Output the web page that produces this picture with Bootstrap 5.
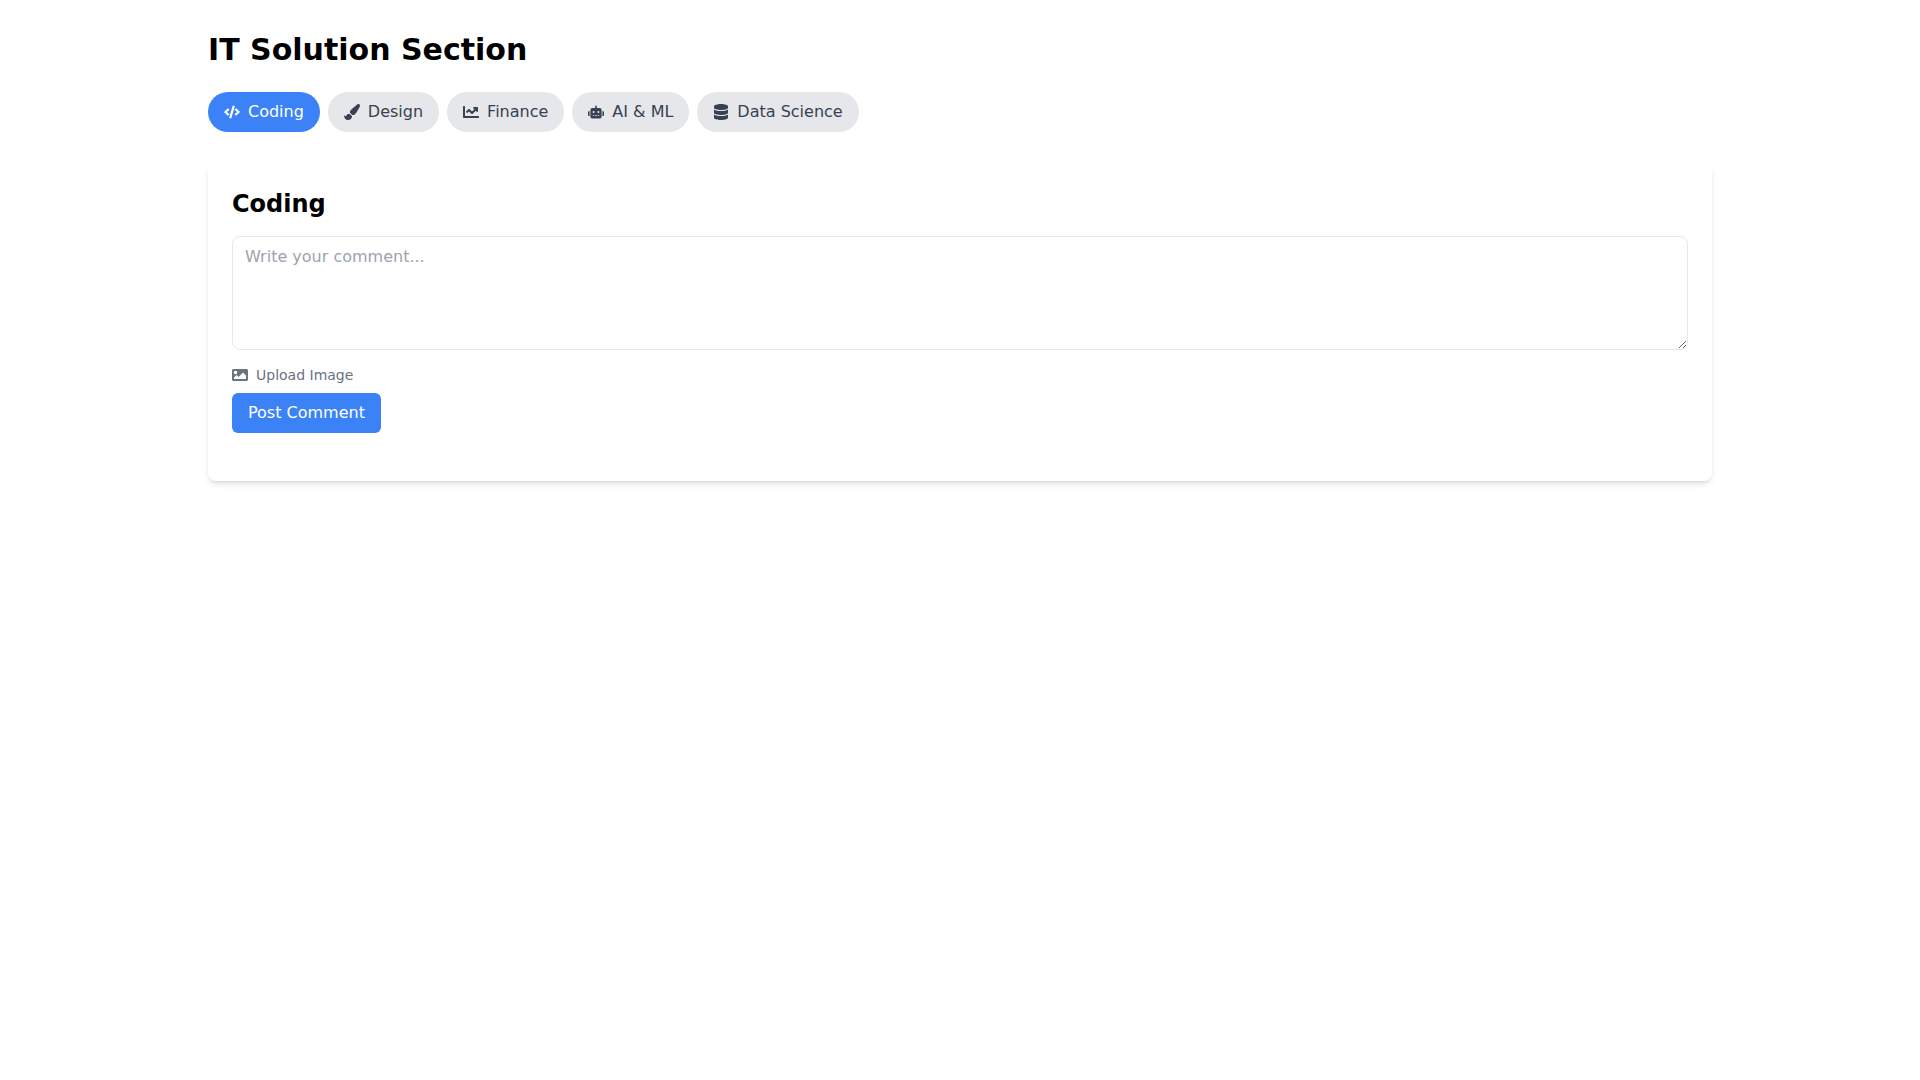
<!DOCTYPE html>
<html lang="en">
<head>
    <meta charset="UTF-8">
    <meta name="viewport" content="width=device-width, initial-scale=1.0">
    <title>IT Solution Section</title>
    <link href="https://cdn.jsdelivr.net/npm/bootstrap@5.3.0/dist/css/bootstrap.min.css" rel="stylesheet">
    <style>
        body {
            font-family: "DejaVu Sans", sans-serif;
            background: #fff;
            color: #000;
            -webkit-font-smoothing: antialiased;
        }
        .page-wrap {
            max-width: 1536px;
            padding: 32px 16px;
        }
        .page-title {
            font-size: 30px;
            line-height: 36px;
            font-weight: 700;
            margin-bottom: 24px;
        }
        .tab-row {
            margin-bottom: 32px;
        }
        .tab-pill {
            height: 40px;
            padding: 8px 16px;
            font-size: 16px;
            line-height: 24px;
            border: 0;
            border-radius: 20px;
            background: #e5e7eb;
            color: #374151;
        }
        .tab-pill:hover, .tab-pill:active {
            background: #e5e7eb;
            color: #374151;
        }
        .tab-pill.is-active, .tab-pill.is-active:hover {
            background: #3b82f6;
            color: #fff;
        }
        .tab-icon {
            width: 16px;
            height: 16px;
            margin-right: 8px;
            fill: currentColor;
            flex: none;
        }
        .panel {
            border: 0;
            border-radius: 8px;
            padding: 24px;
            margin-bottom: 24px;
            box-shadow: 0 4px 6px -1px rgba(0,0,0,.1), 0 2px 4px -2px rgba(0,0,0,.1);
        }
        .panel-title {
            font-size: 24px;
            line-height: 32px;
            font-weight: 700;
            margin-bottom: 16px;
        }
        .comment-box {
            height: 114px;
            padding: 8px 12px;
            font-size: 16px;
            line-height: 24px;
            border: 1px solid #e5e7eb;
            border-radius: 8px;
            color: #374151;
            margin-bottom: 15px;
        }
        .comment-box::placeholder {
            color: #9ca3af;
        }
        .upload-link {
            font-size: 14px;
            line-height: 20px;
            color: #6b7280;
            margin-bottom: 8px;
            cursor: pointer;
        }
        .post-row {
            margin-bottom: 24px;
        }
        .post-btn {
            height: 40px;
            padding: 8px 16px;
            font-size: 16px;
            line-height: 24px;
            border: 0;
            border-radius: 6px;
            background: #3b82f6;
            color: #fff;
        }
        .post-btn:hover {
            background: #3b82f6;
            color: #fff;
        }
    </style>
</head>
<body>
    <div class="container page-wrap">
        <h1 class="page-title">IT Solution Section</h1>

        <!-- Tabs -->
        <div class="d-flex gap-2 tab-row">
            <button class="btn tab-pill is-active d-flex align-items-center">
                <svg class="tab-icon" viewBox="0 0 640 512"><path d="M278.9 511.5l-61-17.7c-6.4-1.8-10-8.5-8.2-14.9L346.2 8.7c1.8-6.4 8.5-10 14.9-8.2l61 17.7c6.4 1.8 10 8.5 8.2 14.9L293.8 503.3c-1.9 6.4-8.5 10.1-14.9 8.2zm-114-112.2l43.5-46.4c4.6-4.9 4.3-12.7-.8-17.2L117 256l90.6-79.7c5.1-4.5 5.5-12.3.8-17.2l-43.5-46.4c-4.5-4.8-12.1-5.1-17-.5L3.8 247.2c-5.1 4.7-5.1 12.8 0 17.5l144.1 135.1c4.9 4.6 12.5 4.4 17-.5zm327.2.6l144.1-135.1c5.1-4.7 5.1-12.8 0-17.5L492.1 112.1c-4.8-4.5-12.4-4.3-17 .5L431.6 159c-4.6 4.9-4.3 12.7.8 17.2L523 256l-90.6 79.7c-5.1 4.5-5.5 12.3-.8 17.2l43.5 46.4c4.5 4.9 12.1 5.1 17 .6z"/></svg>
                Coding
            </button>
            <button class="btn tab-pill d-flex align-items-center">
                <svg class="tab-icon" viewBox="0 0 512 512"><path d="M167.02 309.34c-40.12 2.58-76.53 17.86-97.19 72.3-2.35 6.21-8 9.98-14.59 9.98-11.11 0-45.46-27.67-55.25-34.35C0 439.62 37.93 512 128 512c75.86 0 128-43.77 128-120.19 0-3.11-.65-6.08-.97-9.13l-88.01-73.34zM457.89 0c-15.16 0-29.37 6.71-40.21 16.45C213.27 199.05 192 203.34 192 257.09c0 13.7 3.25 26.76 8.73 38.7l63.82 53.18c7.21 1.8 14.64 3.03 22.39 3.03 62.11 0 98.11-45.47 211.16-256.46 7.38-14.35 13.9-29.85 13.9-45.99C512 20.64 486 0 457.89 0z"/></svg>
                Design
            </button>
            <button class="btn tab-pill d-flex align-items-center">
                <svg class="tab-icon" viewBox="0 0 512 512"><path d="M496 384H64V80c0-8.84-7.16-16-16-16H16C7.16 64 0 71.16 0 80v336c0 17.67 14.33 32 32 32h464c8.84 0 16-7.16 16-16v-32c0-8.84-7.16-16-16-16zM464 96H345.94c-21.38 0-32.09 25.85-16.97 40.97l32.4 32.4L288 242.75l-73.37-73.37c-12.5-12.5-32.76-12.5-45.25 0l-68.69 68.69c-6.25 6.25-6.25 16.38 0 22.63l22.62 22.62c6.25 6.25 16.38 6.25 22.63 0L192 237.25l73.37 73.37c12.5 12.5 32.76 12.5 45.25 0l96-96 32.4 32.4c15.12 15.12 40.97 4.41 40.97-16.97V112c.01-8.84-7.15-16-15.99-16z"/></svg>
                Finance
            </button>
            <button class="btn tab-pill d-flex align-items-center">
                <svg class="tab-icon" viewBox="0 0 640 512"><path d="M32,224H64V416H32A31.96166,31.96166,0,0,1,0,384V256A31.96166,31.96166,0,0,1,32,224Zm512-48V448a64.06328,64.06328,0,0,1-64,64H160a64.06328,64.06328,0,0,1-64-64V176a79.974,79.974,0,0,1,80-80H288V32a32,32,0,0,1,64,0V96H464A79.974,79.974,0,0,1,544,176ZM264,256a40,40,0,1,0-40,40A39.997,39.997,0,0,0,264,256Zm-8,128H192v32h64Zm96,0H288v32h64ZM456,256a40,40,0,1,0-40,40A39.997,39.997,0,0,0,456,256Zm-8,128H384v32h64ZM640,256V384a31.96166,31.96166,0,0,1-32,32H576V224h32A31.96166,31.96166,0,0,1,640,256Z"/></svg>
                AI &amp; ML
            </button>
            <button class="btn tab-pill d-flex align-items-center">
                <svg class="tab-icon" viewBox="0 0 448 512"><path d="M448 73.143v45.714C448 159.143 347.667 192 224 192S0 159.143 0 118.857V73.143C0 32.857 100.333 0 224 0s224 32.857 224 73.143zM448 176v102.857C448 319.143 347.667 352 224 352S0 319.143 0 278.857V176c48.125 33.143 136.208 48.572 224 48.572S399.874 209.143 448 176zm0 160v102.857C448 479.143 347.667 512 224 512S0 479.143 0 438.857V336c48.125 33.143 136.208 48.572 224 48.572S399.874 369.143 448 336z"/></svg>
                Data Science
            </button>
        </div>

        <!-- Comment panel -->
        <div class="card panel">
            <h2 class="panel-title">Coding</h2>
            <textarea class="form-control comment-box" placeholder="Write your comment..."></textarea>
            <label class="d-flex align-items-center upload-link">
                <svg class="tab-icon" viewBox="0 0 512 512"><path d="M464 448H48c-26.51 0-48-21.49-48-48V112c0-26.51 21.49-48 48-48h416c26.51 0 48 21.49 48 48v288c0 26.51-21.49 48-48 48zM112 120c-30.928 0-56 25.072-56 56s25.072 56 56 56 56-25.072 56-56-25.072-56-56-56zM64 384h384V272l-87.515-87.515c-4.686-4.686-12.284-4.686-16.971 0L208 320l-55.515-55.515c-4.686-4.686-12.284-4.686-16.971 0L64 336v48z"/></svg>
                Upload Image
            </label>
            <div class="post-row">
                <button class="btn post-btn">Post Comment</button>
            </div>
        </div>
    </div>

    <script src="https://cdn.jsdelivr.net/npm/bootstrap@5.3.0/dist/js/bootstrap.bundle.min.js"></script>
</body>
</html>
